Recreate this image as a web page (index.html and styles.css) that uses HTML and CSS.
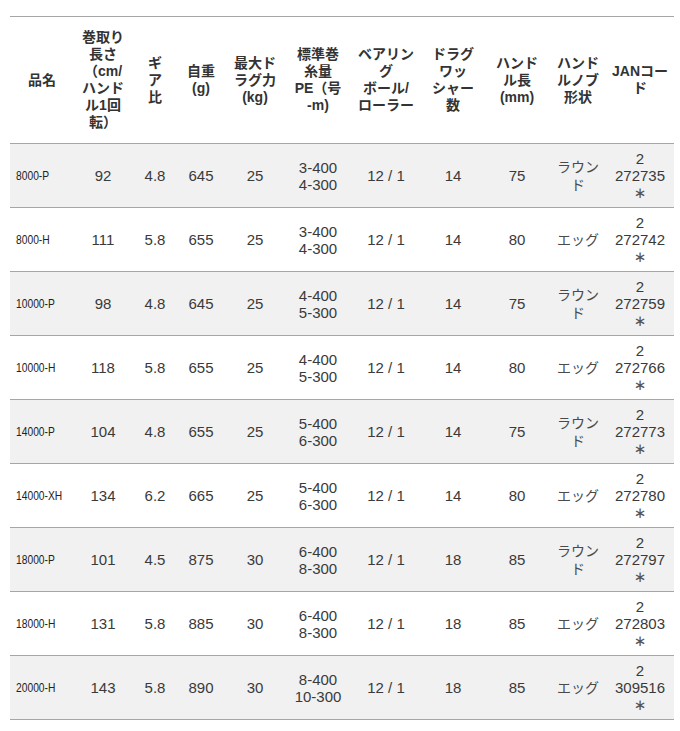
FILE: index.html
```html
<!DOCTYPE html>
<html lang="ja">
<head>
<meta charset="utf-8">
<title>スペック</title>
<link rel="stylesheet" href="styles.css">
</head>
<body>
<table class="spec">
  <colgroup>
    <col class="w1"><col class="w2"><col class="w3"><col class="w4"><col class="w5"><col class="w6"><col class="w7"><col class="w8"><col class="w9"><col class="w10"><col class="w11">
  </colgroup>
  <thead>
    <tr>
      <th>品名</th>
      <th>巻取り<br>長さ<br>（cm/<br>ハンド<br>ル1回<br>転）</th>
      <th>ギ<br>ア<br>比</th>
      <th>自重<br>(g)</th>
      <th>最大ド<br>ラグ力<br>(kg)</th>
      <th>標準巻<br>糸量<br>PE（号<br>-m)</th>
      <th>ベアリン<br>グ<br>ボール/<br>ローラー</th>
      <th>ドラグ<br>ワッ<br>シャー<br>数</th>
      <th>ハンド<br>ル長<br>(mm)</th>
      <th>ハンド<br>ルノブ<br>形状</th>
      <th>JANコー<br>ド</th>
    </tr>
  </thead>
  <tbody>
    <tr class="alt"><td class="model"><span class="mn">8000-P</span></td><td>92</td><td>4.8</td><td>645</td><td>25</td><td>3-400<br>4-300</td><td>12 / 1</td><td>14</td><td>75</td><td class="jp">ラウン<br>ド</td><td>2<br>272735<br><span class="ast">∗</span></td></tr>
    <tr><td class="model"><span class="mn">8000-H</span></td><td>111</td><td>5.8</td><td>655</td><td>25</td><td>3-400<br>4-300</td><td>12 / 1</td><td>14</td><td>80</td><td class="jp">エッグ</td><td>2<br>272742<br><span class="ast">∗</span></td></tr>
    <tr class="alt"><td class="model"><span class="mn">10000-P</span></td><td>98</td><td>4.8</td><td>645</td><td>25</td><td>4-400<br>5-300</td><td>12 / 1</td><td>14</td><td>75</td><td class="jp">ラウン<br>ド</td><td>2<br>272759<br><span class="ast">∗</span></td></tr>
    <tr><td class="model"><span class="mn">10000-H</span></td><td>118</td><td>5.8</td><td>655</td><td>25</td><td>4-400<br>5-300</td><td>12 / 1</td><td>14</td><td>80</td><td class="jp">エッグ</td><td>2<br>272766<br><span class="ast">∗</span></td></tr>
    <tr class="alt"><td class="model"><span class="mn">14000-P</span></td><td>104</td><td>4.8</td><td>655</td><td>25</td><td>5-400<br>6-300</td><td>12 / 1</td><td>14</td><td>75</td><td class="jp">ラウン<br>ド</td><td>2<br>272773<br><span class="ast">∗</span></td></tr>
    <tr><td class="model"><span class="mn">14000-XH</span></td><td>134</td><td>6.2</td><td>665</td><td>25</td><td>5-400<br>6-300</td><td>12 / 1</td><td>14</td><td>80</td><td class="jp">エッグ</td><td>2<br>272780<br><span class="ast">∗</span></td></tr>
    <tr class="alt"><td class="model"><span class="mn">18000-P</span></td><td>101</td><td>4.5</td><td>875</td><td>30</td><td>6-400<br>8-300</td><td>12 / 1</td><td>18</td><td>85</td><td class="jp">ラウン<br>ド</td><td>2<br>272797<br><span class="ast">∗</span></td></tr>
    <tr><td class="model"><span class="mn">18000-H</span></td><td>131</td><td>5.8</td><td>885</td><td>30</td><td>6-400<br>8-300</td><td>12 / 1</td><td>18</td><td>85</td><td class="jp">エッグ</td><td>2<br>272803<br><span class="ast">∗</span></td></tr>
    <tr class="alt"><td class="model"><span class="mn">20000-H</span></td><td>143</td><td>5.8</td><td>890</td><td>30</td><td>8-400<br>10-300</td><td>12 / 1</td><td>18</td><td>85</td><td class="jp">エッグ</td><td>2<br>309516<br><span class="ast">∗</span></td></tr>
  </tbody>
</table>
</body>
</html>
```

FILE: styles.css
```css
html, body {
  margin: 0;
  padding: 0;
  background: #ffffff;
}

body {
  padding: 16px 6px 0 10px;
  font-family: "Liberation Sans", "Noto Sans CJK JP", sans-serif;
  color: #333333;
}

.spec {
  width: 664px;
  table-layout: fixed;
  border-collapse: collapse;
  border-spacing: 0;
}

.w1 { width: 64px; }
.w2 { width: 58px; }
.w3 { width: 46px; }
.w4 { width: 46px; }
.w5 { width: 62px; }
.w6 { width: 64px; }
.w7 { width: 72px; }
.w8 { width: 62px; }
.w9 { width: 66px; }
.w10 { width: 56px; }
.w11 { width: 68px; }

.spec th,
.spec td {
  border-top: 1px solid #a6a6a6;
  border-bottom: 1px solid #a6a6a6;
  text-align: center;
  vertical-align: middle;
  white-space: nowrap;
  padding: 0;
}

.spec th {
  height: 126px;
  font-size: 14px;
  line-height: 17px;
  font-weight: bold;
  color: #333333;
}

.spec td {
  height: 63px;
  font-size: 15px;
  line-height: 17px;
  color: #3a3a3a;
}

.spec tr.alt td {
  background: #f1f1f1;
}

.spec td.model {
  text-align: left;
  padding-left: 6px;
  font-size: 13px;
  color: #222222;
}

.mn {
  display: inline-block;
  transform: scaleX(0.79);
  transform-origin: left center;
}

.spec td.jp {
  font-family: "Liberation Sans", "Noto Sans CJK JP", sans-serif;
  font-size: 14px;
  line-height: 18px;
  color: #4a4a4a;
}

.ast {
  font-family: "DejaVu Sans", sans-serif;
  font-size: 15px;
  color: #555555;
}
```
